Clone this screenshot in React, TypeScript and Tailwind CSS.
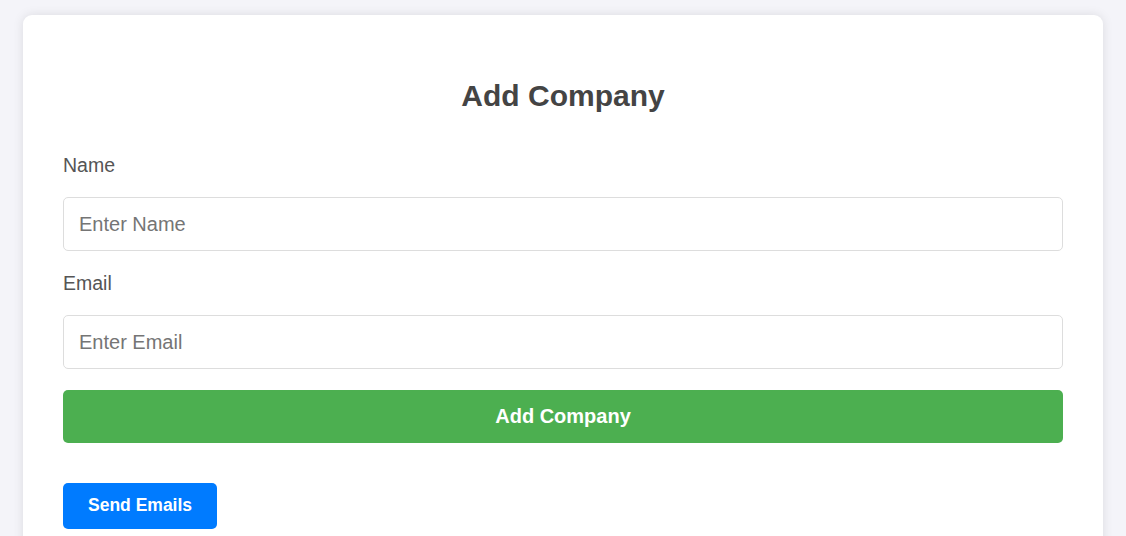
import React from "react";

export default function App() {
  return (
    <div
      className="min-h-[536px] w-full bg-[#f4f4f9] pt-[15px] px-[23px] overflow-hidden"
      style={{ fontFamily: '"Liberation Sans", Arial, sans-serif' }}
    >
      <div className="bg-white rounded-[9px] shadow-[0_0_11px_rgba(0,0,0,0.1)] px-[40px] pt-[40px] pb-[40px]">
        <h2 className="mt-[25px] text-center text-[30px] leading-[32px] font-bold text-[#444]">
          Add Company
        </h2>
        <label className="block mt-[43px] text-[19.5px] leading-[21px] text-[#555]">Name</label>
        <input
          type="text"
          placeholder="Enter Name"
          className="block w-full mt-[21px] h-[54px] border border-[#dddddd] rounded-[5px] px-[15px] text-[20px] text-[#333] placeholder:text-[#757575] outline-none"
        />
        <label className="block mt-[22px] text-[19.5px] leading-[21px] text-[#555]">Email</label>
        <input
          type="email"
          placeholder="Enter Email"
          className="block w-full mt-[21px] h-[54px] border border-[#dddddd] rounded-[5px] px-[15px] text-[20px] text-[#333] placeholder:text-[#757575] outline-none"
        />
        <button className="block w-full mt-[21px] h-[53px] bg-[#4caf50] rounded-[5px] text-white font-bold text-[20px] leading-[23px] pb-[1px]">
          Add Company
        </button>
        <button className="block mt-[40px] h-[46px] px-[25px] bg-[#007bff] rounded-[5px] text-white font-bold text-[17.5px] leading-[20px] pb-[3px]">
          Send Emails
        </button>
      </div>
    </div>
  );
}
